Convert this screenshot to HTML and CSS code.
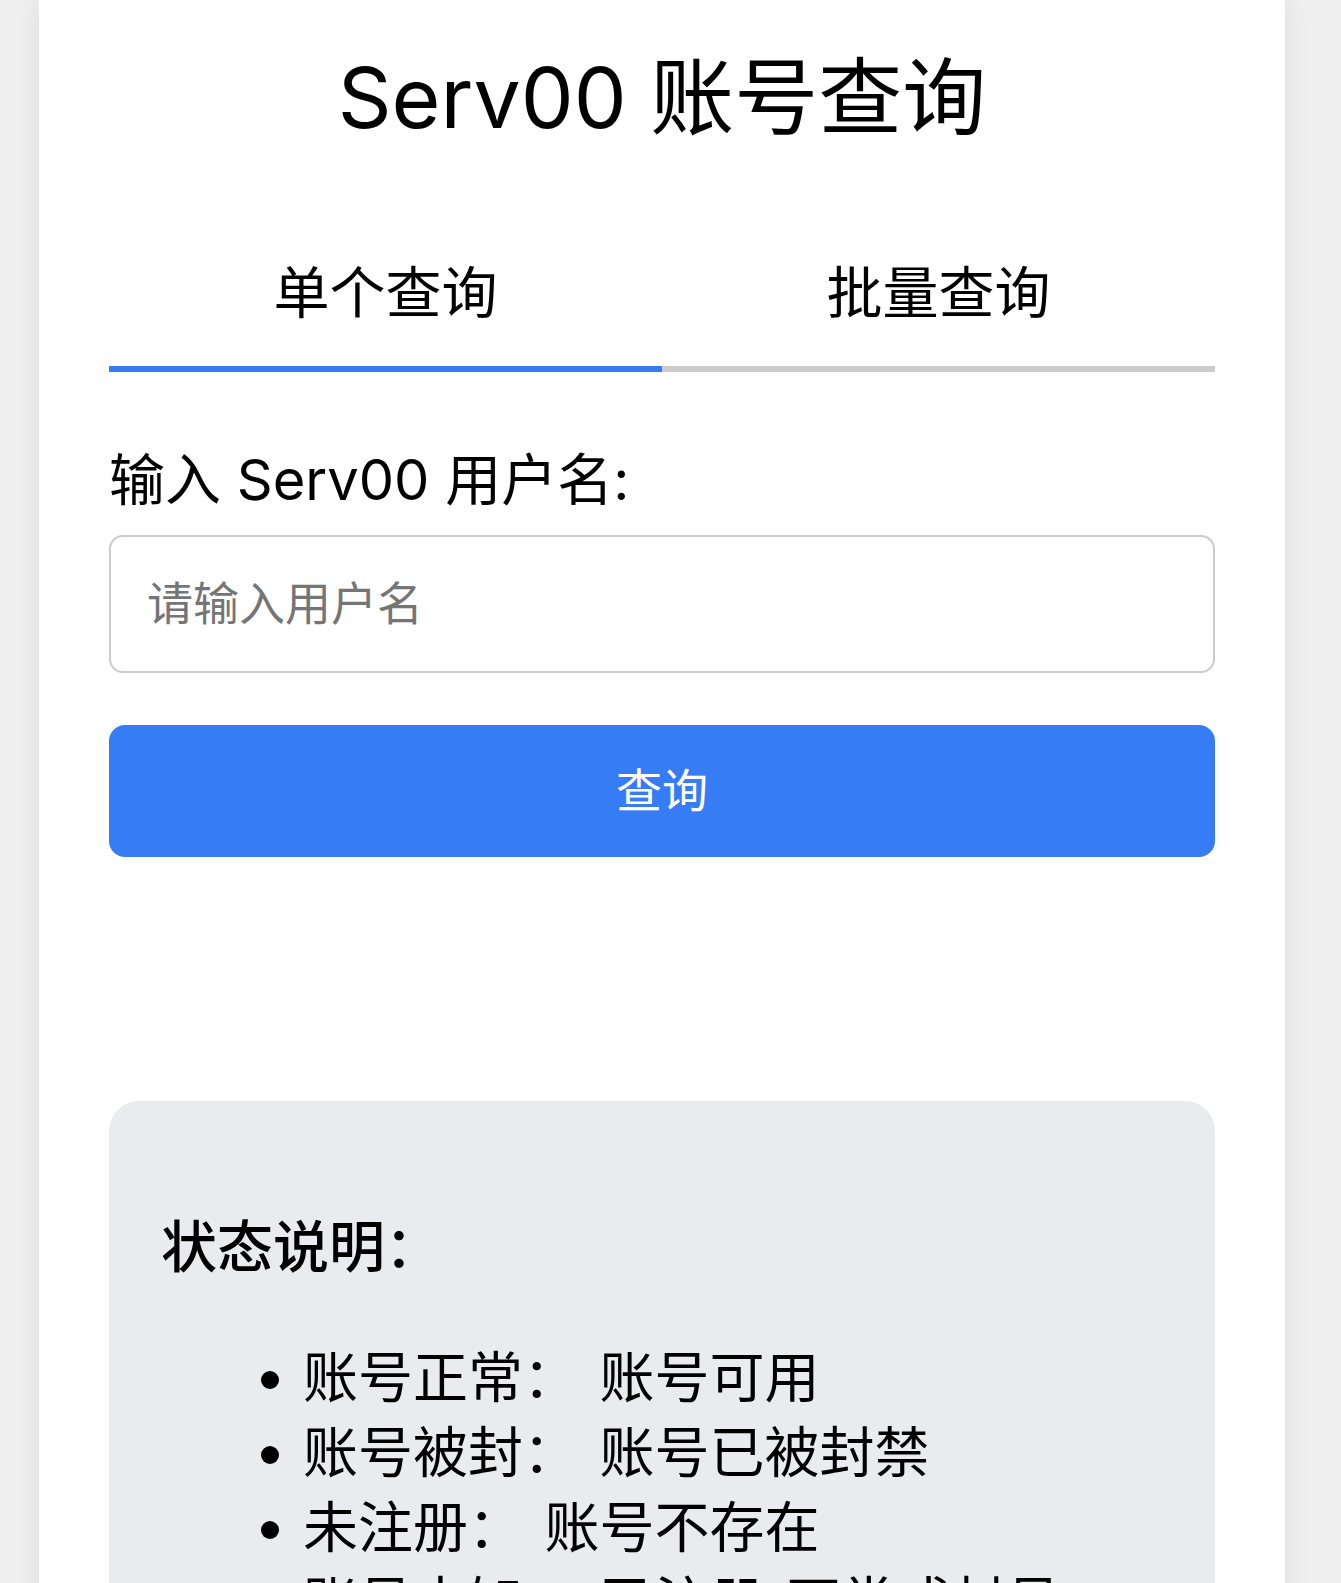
FILE: index.html
```html
<!DOCTYPE html>
<html lang="zh-CN">
<head>
<meta charset="utf-8">
<title>Serv00 账号查询</title>
<link rel="stylesheet" href="styles.css">
</head>
<body>
<div class="card">
  <h1 class="title">Serv00 账号查询</h1>
  <div class="tabs">
    <div class="tab tab-active">单个查询</div>
    <div class="tab">批量查询</div>
  </div>
  <label class="label" for="username">输入 Serv00 用户名:</label>
  <input class="input" id="username" type="text" placeholder="请输入用户名">
  <button class="btn" type="button">查询</button>
  <div class="status">
    <h3 class="status-title">状态说明：</h3>
    <ul class="status-list">
      <li>账号正常： 账号可用</li>
      <li>账号被封： 账号已被封禁</li>
      <li>未注册： 账号不存在</li>
      <li>账号未知： 已注册 不常或封号</li>
    </ul>
  </div>
</div>
</body>
</html>
```
FILE: styles.css
```css
html, body {
  margin: 0;
  padding: 0;
}
body {
  background: #efefef;
  font-family: "Inter", "Noto Sans CJK SC", sans-serif;
  color: #000;
}
.card {
  margin: 0 56px 0 39px;
  background: #fff;
  padding: 48px 70px 40px;
  box-shadow: 0 0 24px rgba(0, 0, 0, 0.08);
  min-height: 1600px;
  box-sizing: border-box;
}
.title {
  margin: 0;
  font-size: 84px;
  line-height: 100px;
  font-weight: 400;
  text-align: center;
}
.tabs {
  display: flex;
  margin-top: 113px;
}
.tab {
  flex: 1;
  text-align: center;
  font-size: 56px;
  line-height: 56px;
  padding: 4px 0 45px;
  border-bottom: 6px solid #cccccc;
}
.tab-active {
  border-bottom-color: #367cf5;
}
.label {
  display: block;
  margin-top: 80px;
  font-size: 56px;
  line-height: 56px;
}
.input {
  display: block;
  box-sizing: border-box;
  width: 100%;
  height: 138px;
  margin-top: 27px;
  padding: 0 36px 2px;
  border: 2px solid #cccccc;
  border-radius: 14px;
  font-family: inherit;
  font-size: 46px;
  color: #000;
  background: #fff;
  outline: none;
}
.input::placeholder {
  color: #757575;
}
.btn {
  display: block;
  width: 100%;
  height: 132px;
  margin-top: 52px;
  padding: 0 0 9px;
  border: none;
  border-radius: 16px;
  background: #367cf5;
  color: #fff;
  font-family: inherit;
  font-size: 46px;
}
.status {
  margin-top: 244px;
  background: #e9ebef;
  border-radius: 30px;
  padding: 52px 52px 60px;
}
.status-title {
  margin: 66px 0 0;
  font-size: 56px;
  line-height: 56px;
  font-weight: 500;
}
.status-list {
  margin: 65px 0 0;
  padding-left: 142px;
  font-size: 55px;
  line-height: 75px;
  word-spacing: 6px;
}
```
